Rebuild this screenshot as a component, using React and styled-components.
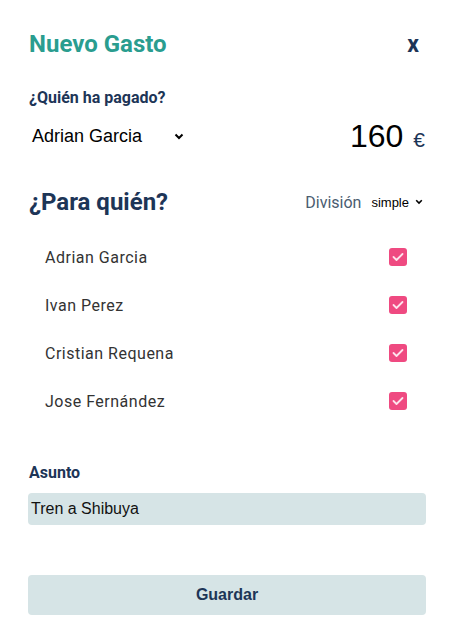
import React from "react";
import styled, { createGlobalStyle } from "styled-components";

const GlobalStyle = createGlobalStyle`
  body {
    margin: 0;
    background: #fff;
    font-family: Roboto, "Liberation Sans", sans-serif;
  }
`;

const Modal = styled.div`
  width: 455px;
  height: 641px;
  box-sizing: border-box;
  padding: 24px 29px 0 28px;
  background: #fff;
`;

const Header = styled.div`
  display: flex;
  justify-content: space-between;
  align-items: center;
  height: 40px;
`;

const Title = styled.h1`
  margin: 0 0 0 1px;
  font-size: 24px;
  line-height: 28px;
  font-weight: 700;
  color: #2a9d8f;
`;

const Close = styled.button`
  border: none;
  background: none;
  padding: 0;
  margin-right: 7px;
  font-family: Roboto, sans-serif;
  font-size: 23px;
  font-weight: 700;
  color: #1d3557;
  cursor: pointer;
`;

const Label = styled.div`
  font-size: 16px;
  line-height: 19px;
  font-weight: 700;
  color: #1d3557;
  margin: ${p => p.top}px 0 0 1px;
`;

const PayRow = styled.div`
  display: flex;
  justify-content: space-between;
  align-items: center;
  margin-top: 11px;
  height: 36px;
`;

const Select = styled.div`
  display: flex;
  align-items: center;
  gap: ${p => p.gap}px;
  font-family: "Liberation Sans", Arial, sans-serif;
  font-size: ${p => p.size}px;
  color: #000;
`;

const Amount = styled.div`
  display: flex;
  align-items: baseline;
  gap: 10px;
  margin-right: 1px;
`;

const Number = styled.span`
  font-family: "Liberation Sans", Arial, sans-serif;
  font-size: 32px;
  color: #000;
`;

const Euro = styled.span`
  font-family: "Liberation Sans", Arial, sans-serif;
  font-size: 21px;
  color: #1d3557;
`;

const SplitHeader = styled.div`
  display: flex;
  justify-content: space-between;
  align-items: center;
  margin-top: 34px;
  height: 28px;
`;

const SubTitle = styled.h2`
  margin: 0 0 0 1px;
  font-size: 24px;
  line-height: 28px;
  font-weight: 700;
  color: #1d3557;
`;

const Division = styled.div`
  display: flex;
  align-items: center;
  gap: 10px;
  margin-right: 3px;
`;

const DivisionLabel = styled.span`
  font-size: 16px;
  color: #4a5c70;
`;

const List = styled.div`
  display: flex;
  flex-direction: column;
  margin-top: 17px;
  padding: 0 19px 0 17px;
`;

const Row = styled.label`
  display: flex;
  justify-content: space-between;
  align-items: center;
  height: 48px;
`;

const Name = styled.span`
  font-size: 16px;
  letter-spacing: 0.5px;
  color: #333;
`;

const Check = styled.span`
  width: 18px;
  height: 18px;
  border-radius: 3px;
  background: #ef4a81;
  display: flex;
  align-items: center;
  justify-content: center;
`;

const Input = styled.div`
  margin-top: 11px;
  height: 32px;
  border-radius: 4px;
  background: #d6e4e6;
  display: flex;
  align-items: center;
  padding-left: 3px;
  font-family: "Liberation Sans", Arial, sans-serif;
  font-size: 16px;
  color: #111;
`;

const SaveButton = styled.button`
  display: block;
  width: 100%;
  margin-top: 50px;
  height: 40px;
  border: none;
  border-radius: 4px;
  background: #d6e4e6;
  font-family: "Liberation Sans", Arial, sans-serif;
  font-size: 16px;
  font-weight: 700;
  color: #1d3557;
  cursor: pointer;
`;

const Chevron = ({ size = 10 }) => (
  <svg width={size} height={size * 0.7} viewBox="0 0 10 7">
    <path d="M1.5 1.5 L5 5 L8.5 1.5" fill="none" stroke="#000" strokeWidth="2" />
  </svg>
);

const Tick = () => (
  <svg width="12" height="10" viewBox="0 0 12 10">
    <path d="M1.5 5 L4.5 8 L10.5 2" fill="none" stroke="#fde3ec" strokeWidth="1.8" strokeLinecap="round" strokeLinejoin="round" />
  </svg>
);

const people = ["Adrian Garcia", "Ivan Perez", "Cristian Requena", "Jose Fernández"];

const App = () => {
  return (
    <Modal>
      <GlobalStyle />
      <Header>
        <Title>Nuevo Gasto</Title>
        <Close>x</Close>
      </Header>
      <Label top={24}>¿Quién ha pagado?</Label>
      <PayRow>
        <Select size={18} gap={32} style={{ marginLeft: 4 }}>
          Adrian Garcia
          <Chevron size={10} />
        </Select>
        <Amount>
          <Number>160</Number>
          <Euro>€</Euro>
        </Amount>
      </PayRow>
      <SplitHeader>
        <SubTitle>¿Para quién?</SubTitle>
        <Division>
          <DivisionLabel>División</DivisionLabel>
          <Select size={13} gap={6}>
            simple
            <Chevron size={8} />
          </Select>
        </Division>
      </SplitHeader>
      <List>
        {people.map(p => (
          <Row key={p}>
            <Name>{p}</Name>
            <Check>
              <Tick />
            </Check>
          </Row>
        ))}
      </List>
      <Label top={38}>Asunto</Label>
      <Input>Tren a Shibuya</Input>
      <SaveButton>Guardar</SaveButton>
    </Modal>
  );
};

export default App;
